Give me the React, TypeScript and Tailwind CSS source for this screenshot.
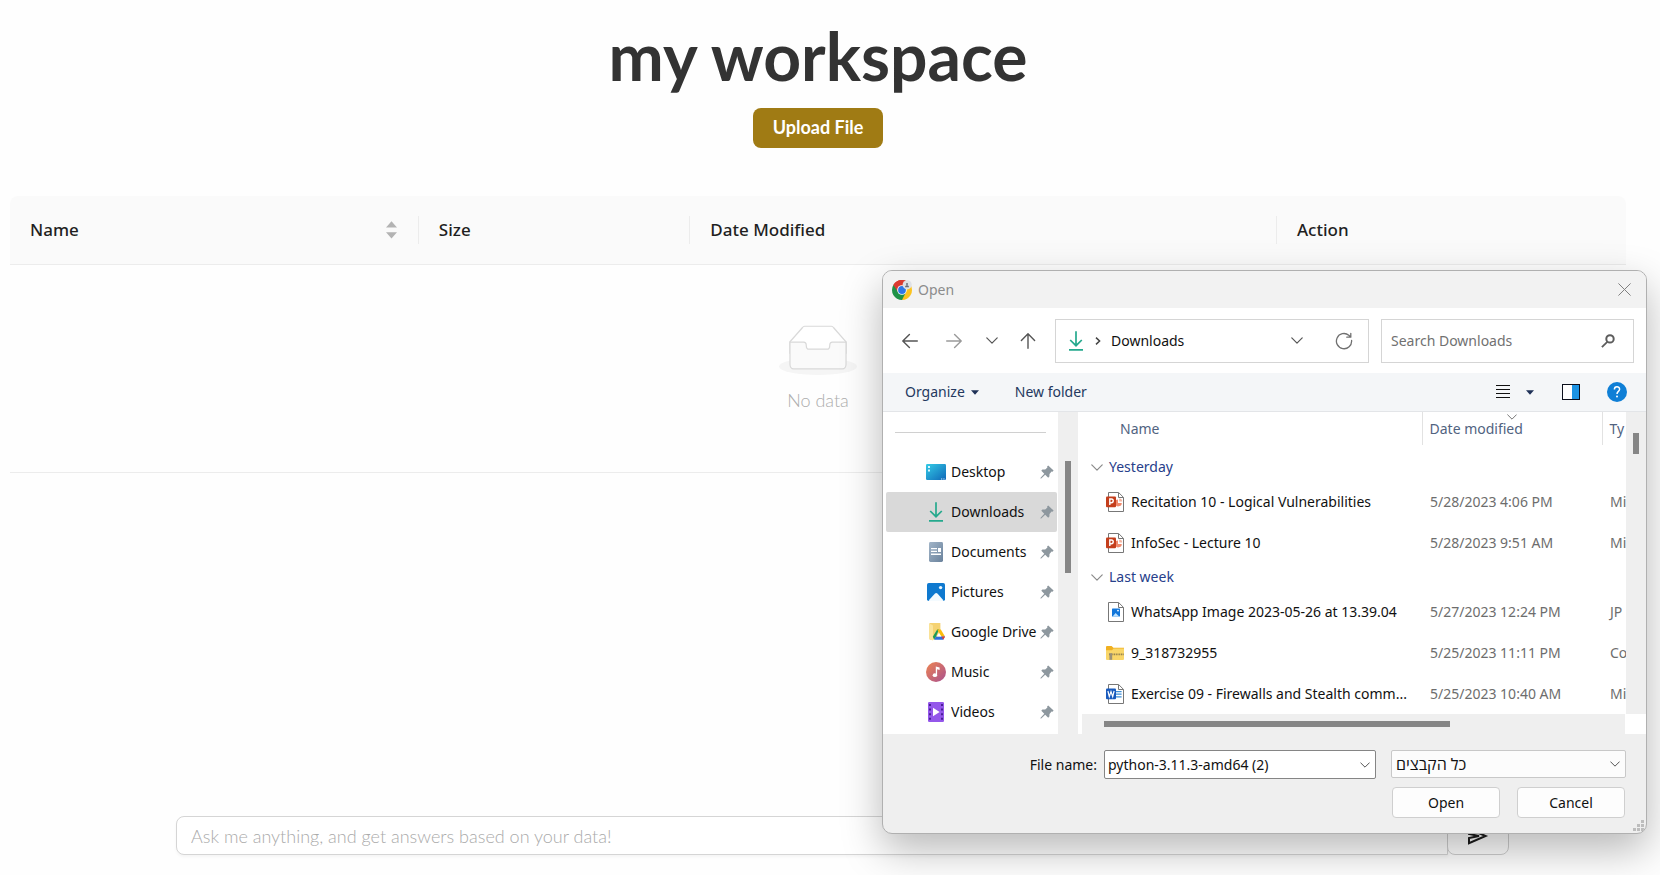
import type { ReactNode } from 'react';

const strokeProps = { fill: 'none', strokeLinecap: 'round', strokeLinejoin: 'round' } as const;

function ChromeIcon() {
  return (
    <svg width="20" height="20" viewBox="0 0 20 20" aria-hidden="true">
      <path d="M10 10 L1.34 5 A10 10 0 0 1 18.66 5 Z" fill="#db3a31" />
      <path d="M10 10 L18.66 5 A10 10 0 0 1 10 20 Z" fill="#fcc31e" />
      <path d="M10 10 L10 20 A10 10 0 0 1 1.34 5 Z" fill="#1f9247" />
      <path d="M10 5.5 H18.9 A10 10 0 0 0 18.66 5 Z" fill="#fcc31e" />
      <path d="M13.9 12.3 L10 20 L9 14 Z" fill="#1f9247" />
      <path d="M1.34 5 L6.1 12 L10 5.4 H18.8 L17 2.9 A10 10 0 0 0 1.34 5Z" fill="#db3a31" />
      <circle cx="10" cy="10" r="4.8" fill="#fff" />
      <circle cx="10" cy="10" r="3.9" fill="#2f77e8" />
      <circle cx="15.2" cy="4.8" r="4.6" fill="#dfe1e6" />
      <circle cx="15" cy="4" r="1" fill="#6b6f7c" />
      <path d="M13 7.2c0-2.6 4-2.6 4 0z" fill="#6b6f7c" />
    </svg>
  );
}

function CloseIcon() {
  return (
    <svg width="13" height="13" viewBox="0 0 13 13" stroke="#808080" {...strokeProps} aria-hidden="true">
      <path d="M.7 .7 L12.3 12.3 M12.3 .7 L.7 12.3" />
    </svg>
  );
}

function ArrowIcon({ className }: { className: string }) {
  return (
    <svg width="16" height="16" viewBox="0 0 16 16" stroke="currentColor" strokeWidth="1.4" {...strokeProps} className={className} aria-hidden="true">
      <path d="M15.3 8 H.9 M7.4 1.4 L.8 8 L7.4 14.6" />
    </svg>
  );
}

function ChevronDown({ className, width = 12 }: { className: string; width?: number }) {
  return (
    <svg width={width} height={width / 2 + 1} viewBox="0 0 12 7" stroke="currentColor" strokeWidth="1.2" {...strokeProps} className={className} aria-hidden="true">
      <path d="M.8 .9 L6 6.1 L11.2 .9" />
    </svg>
  );
}

function CrumbChevron() {
  return (
    <svg width="6" height="8" viewBox="0 0 6 8" stroke="#444" strokeWidth="1.5" fill="none" aria-hidden="true">
      <path d="M1 .6 L4.6 4 L1 7.4" />
    </svg>
  );
}

function Caret() {
  return (
    <svg width="8" height="5" viewBox="0 0 8 5" aria-hidden="true">
      <path d="M0 0.3 H8 L4 4.8 Z" fill="#1e3157" />
    </svg>
  );
}

function DownloadIcon() {
  return (
    <svg width="14" height="20" viewBox="0 0 14 20" stroke="#25a98d" strokeWidth="1.7" fill="none" aria-hidden="true">
      <path d="M7 .3 V14.3 M1.2 9 L7 14.7 L12.8 9 M0 18.9 H14" />
    </svg>
  );
}

function RefreshIcon() {
  return (
    <svg width="18" height="18" viewBox="0 0 18 18" stroke="#707070" strokeWidth="1.3" {...strokeProps} aria-hidden="true">
      <path d="M16.6 8.5 A7.6 7.6 0 1 1 13.8 3.2 L15.6 5 M15.8 1.3 V5.2 H11.8" />
    </svg>
  );
}

function SearchIcon() {
  return (
    <svg width="14" height="14" viewBox="0 0 14 14" stroke="#5c5c5c" fill="none" aria-hidden="true">
      <circle cx="9" cy="4.9" r="3.7" strokeWidth="2" />
      <path d="M6.3 7.8 L.9 13.2" strokeWidth="1.8" />
    </svg>
  );
}

function ListIcon() {
  return (
    <svg width="14" height="14" viewBox="0 0 14 14" stroke="#111" shapeRendering="crispEdges" aria-hidden="true">
      <path d="M0 .5 H14 M0 4.5 H14 M0 8.5 H14 M0 12.5 H14" />
    </svg>
  );
}

function PaneIcon() {
  return (
    <svg width="18" height="16" viewBox="0 0 18 16" aria-hidden="true">
      <rect x=".5" y=".5" width="17" height="15" fill="#fff" stroke="#0b0f1c" />
      <rect x="10" y="1" width="7" height="14" fill="#1c93e3" />
    </svg>
  );
}

function HelpIcon() {
  return (
    <svg width="20" height="20" viewBox="0 0 20 20" aria-hidden="true">
      <circle cx="10" cy="10" r="10" fill="#0f7fd6" />
      <path d="M7.4 7.4 C7.4 3.9 12.6 4 12.6 7.2 C12.6 9.3 10 9.5 10 12" fill="none" stroke="#fff" strokeWidth="1.5" />
      <circle cx="10" cy="14.6" r="1" fill="#fff" />
    </svg>
  );
}

function PinIcon() {
  return (
    <svg width="14" height="14" viewBox="0 0 14 14" fill="#8d979e" aria-hidden="true">
      <path d="M8.2 .4 L13.6 5.6 L12.6 6.8 L11.6 6.6 L9.5 9 L9.4 11.6 L8.2 12.7 L5.2 9.7 L1.2 13.4 L.4 13.6 L.6 12.7 L4.3 8.8 L1.3 5.8 L2.4 4.6 L5.2 4.5 L7.4 2.5 L7.1 1.5 Z" />
    </svg>
  );
}

function EmptyIcon() {
  return (
    <svg width="78" height="50" viewBox="0 0 64 41" aria-hidden="true">
      <g transform="translate(0 1)" fill="none" fillRule="evenodd">
        <ellipse fill="#f5f5f5" cx="32" cy="33" rx="32" ry="7" />
        <g fillRule="nonzero" stroke="#d9d9d9">
          <path d="M55 12.76L44.854 1.258C44.367.474 43.656 0 42.907 0H21.093c-.749 0-1.46.474-1.947 1.257L9 12.761V22h46v-9.24z" fill="#fff" />
          <path d="M41.613 15.931c0-1.605.994-2.93 2.227-2.931H55v18.137C55 33.26 53.68 35 52.05 35h-40.1C10.32 35 9 33.259 9 31.137V13h11.16c1.233 0 2.227 1.323 2.227 2.928v.022c0 1.605 1.005 2.901 2.237 2.901h14.752c1.232 0 2.237-1.308 2.237-2.913v-.007z" fill="#fafafa" />
        </g>
      </g>
    </svg>
  );
}

function DesktopIcon() {
  return (
    <svg width="20" height="16" viewBox="0 0 20 16" aria-hidden="true">
      <defs>
        <linearGradient id="desk" x1="0" y1="0" x2="1" y2="1">
          <stop offset="0" stopColor="#34cbe6" />
          <stop offset="1" stopColor="#0f68b8" />
        </linearGradient>
      </defs>
      <rect width="20" height="16" rx="1.2" fill="url(#desk)" />
      <path d="M2 2h2v2H2z M2 5.5h2v2H2z" fill="#d8f7ff" />
      <path d="M15 14.6h1.3v1H15z M17.3 14.6h1.3v1h-1.3z" fill="#cfe6fa" />
    </svg>
  );
}

function DocumentsIcon() {
  return (
    <svg width="14" height="20" viewBox="0 0 14 20" aria-hidden="true">
      <defs>
        <linearGradient id="docs" x1="0" y1="0" x2="1" y2="1">
          <stop offset="0" stopColor="#a2b5c8" />
          <stop offset="1" stopColor="#6a829c" />
        </linearGradient>
      </defs>
      <rect width="14" height="20" rx="1.4" fill="url(#docs)" />
      <path d="M2 6h6v1.3H2z M2 8.8h6v1.3H2z M2 11.6h10v1.3H2z M9 6h3v4H9z" fill="#fff" />
    </svg>
  );
}

function PicturesIcon() {
  return (
    <svg width="18" height="18" viewBox="0 0 18 18" aria-hidden="true">
      <rect width="18" height="18" rx="1.8" fill="#0f79cf" />
      <path d="M1.6 17.6 L8 10.6 Q9.2 9.6 10.4 10.6 L16.6 17.6 Q16.2 18 15.6 18 H2.6 Q2 18 1.6 17.6z" fill="#f4fbff" />
      <circle cx="13.6" cy="4.6" r="1.7" fill="#e8f6ff" />
    </svg>
  );
}

function DriveIcon() {
  return (
    <svg width="18" height="20" viewBox="0 0 18 20" aria-hidden="true">
      <path d="M2.2 2.2 Q2.2 1 3.4 1 H13.4 V16 L5 18 Q2.2 18.6 2.2 16z" fill="#f5d272" />
      <path d="M2.2 1.4 L5.4 3 Q6 3.4 6 4.2 V18.6 L3 17.4 Q2.2 17 2.2 16.2z" fill="#fbe49b" />
      <path d="M10.2 7.6 L12 7.6 L8.8 15 L7.2 17.4 L5.8 14.8z" fill="#1d9b57" />
      <path d="M10.2 7.6 H13.8 L18 14.6 H14.2z" fill="#fbbd0c" />
      <path d="M8.9 14.6 H18 L16.2 17.8 H7.2z" fill="#2d6fe0" />
      <path d="M14.6 14.6 H18 L16.2 17.8z" fill="#e6412f" />
      <path d="M12 10.8 L14.2 14.6 H9.7z" fill="#fff" />
    </svg>
  );
}

function MusicIcon() {
  return (
    <svg width="20" height="20" viewBox="0 0 20 20" aria-hidden="true">
      <defs>
        <linearGradient id="music" x1="0" y1="0" x2="1" y2="1">
          <stop offset="0" stopColor="#ee8552" />
          <stop offset="1" stopColor="#a9508f" />
        </linearGradient>
      </defs>
      <circle cx="10" cy="10" r="10" fill="url(#music)" />
      <ellipse cx="8.9" cy="13.2" rx="2.2" ry="1.9" fill="#fff" />
      <path d="M9.8 4.4 L13.6 5.6 V8 L11.1 7.2 V13.4 H9.8z" fill="#fff" />
    </svg>
  );
}

function VideosIcon() {
  return (
    <svg width="16" height="20" viewBox="0 0 16 20" aria-hidden="true">
      <rect width="16" height="20" rx="1.2" fill="#9457ea" />
      <path d="M1 2h2v2H1z M1 6.6h2v2H1z M1 11.2h2v2H1z M1 15.8h2v2H1z M13 2h2v2h-2z M13 6.6h2v2h-2z M13 11.2h2v2h-2z M13 15.8h2v2h-2z" fill="#4a1f96" />
      <path d="M5 5.8 L11.6 10 L5 14.2z" fill="#fff" />
    </svg>
  );
}

function Sheet({ children }: { children: ReactNode }) {
  return (
    <svg width="18" height="20" viewBox="0 0 18 20" aria-hidden="true">
      <path d="M2.5 .5 H12.6 L17.5 5.4 V19.5 H2.5z" fill="#fff" stroke="#777" />
      <path d="M12.5 .6 V5.5 H17.4" fill="none" stroke="#777" />
      {children}
    </svg>
  );
}

function SlidesIcon() {
  return (
    <Sheet>
      <path d="M12 7.6 A3.4 3.4 0 1 0 15.8 11 H12z" fill="#f08a6d" />
      <path d="M13.2 6.6 A3 3 0 0 1 16.2 9.6 H13.2z" fill="#f4b5a2" />
      <rect x="0" y="4.6" width="10" height="10.6" rx="1" fill="#c43e1c" />
      <path d="M3.8 13 V7 H5.4 a1.8 1.8 0 0 1 0 3.7 H3.8" fill="none" stroke="#fff" strokeWidth="1.4" />
    </Sheet>
  );
}

function WordIcon() {
  return (
    <Sheet>
      <path d="M10 7h5.6v1.2H10z M10 9.6h5.6v1.2H10z M10 12.2h5.6v1.2H10z" fill="#3d8ed8" />
      <rect x="0" y="4.6" width="10" height="10.6" rx="1" fill="#185abd" />
      <path d="M1.9 7 L3.3 12.6 L5 7.6 L6.7 12.6 L8.1 7" fill="none" stroke="#fff" strokeWidth="1.2" />
    </Sheet>
  );
}

function ImageFileIcon() {
  return (
    <Sheet>
      <rect x="6" y="6.6" width="8" height="8" rx=".6" fill="#1276da" />
      <path d="M6.6 14.4 L9.6 11 L13.2 14.4z" fill="#bfe3ff" />
      <circle cx="12" cy="8.6" r=".9" fill="#fff" />
    </Sheet>
  );
}

function ZipIcon() {
  return (
    <svg width="18" height="14" viewBox="0 0 18 14" aria-hidden="true">
      <path d="M0 1 Q0 0 1 0 H5.6 L7.4 1.8 H18 V5 H0z" fill="#f0b021" />
      <path d="M0 4.2 H6 L7.6 2.6 H18 V13 Q18 14 17 14 H1 Q0 14 0 13z" fill="#f9d669" />
      <path d="M3 8.4 H18" stroke="#8b7b4d" strokeWidth="1.8" strokeDasharray="1 .7" />
      <path d="M3.4 7.2 H6.2 V13.8 H3.4z" fill="#9a9178" />
    </svg>
  );
}

function SendIcon() {
  return (
    <svg width="22" height="20" viewBox="0 0 22 20" fill="none" stroke="#1c1c1c" strokeWidth="2" aria-hidden="true">
      <path d="M2 2.8 L18.6 10 L2 17.2 V12 L12 10 L2 8z" />
    </svg>
  );
}

function GripIcon() {
  return (
    <svg width="11" height="11" viewBox="0 0 11 11" fill="#bdbdbd" aria-hidden="true">
      <path d="M8 0h3v3H8z M8 4h3v3H8z M8 8h3v3H8z M4 4h3v3H4z M4 8h3v3H4z M0 8h3v3H0z" />
    </svg>
  );
}

function Sorter() {
  return (
    <svg width="11" height="18" viewBox="0 0 11 18" fill="#b3b3b3" aria-hidden="true">
      <path d="M5.5 .3 L11 6.6 H0z M0 11.3 H11 L5.5 17.6z" />
    </svg>
  );
}

const places = [
  { label: 'Desktop', icon: <DesktopIcon /> },
  { label: 'Downloads', icon: <DownloadIcon />, active: true },
  { label: 'Documents', icon: <DocumentsIcon /> },
  { label: 'Pictures', icon: <PicturesIcon /> },
  { label: 'Google Drive', icon: <DriveIcon /> },
  { label: 'Music', icon: <MusicIcon /> },
  { label: 'Videos', icon: <VideosIcon /> },
];

const groups = [
  {
    title: 'Yesterday',
    pad: 'h-9 pt-2',
    files: [
      { name: 'Recitation 10 - Logical Vulnerabilities', date: '5/28/2023 4:06 PM', type: 'Mi', icon: <SlidesIcon /> },
      { name: 'InfoSec - Lecture 10', date: '5/28/2023 9:51 AM', type: 'Mi', icon: <SlidesIcon /> },
    ],
  },
  {
    title: 'Last week',
    pad: 'h-7',
    files: [
      { name: 'WhatsApp Image 2023-05-26 at 13.39.04', date: '5/27/2023 12:24 PM', type: 'JP', icon: <ImageFileIcon /> },
      { name: '9_318732955', date: '5/25/2023 11:11 PM', type: 'Co', icon: <ZipIcon /> },
      { name: 'Exercise 09 - Firewalls and Stealth comm...', date: '5/25/2023 10:40 AM', type: 'Mi', icon: <WordIcon /> },
    ],
  },
];

function Sidebar() {
  return (
    <nav aria-label="Places" className="w-[175px] shrink-0 bg-white">
      <div className="mx-3 mt-5 mb-[19px] border-t border-[#d0d0d0]" />
      <ul>
        {places.map((p) => (
          <li key={p.label}>
            <a
              href="#"
              className={
                p.active
                  ? 'ml-[3px] mr-px flex h-10 items-center rounded-xs bg-[#d9d9d9] pl-10 pr-[3px]'
                  : 'ml-[3px] mr-px flex h-10 items-center pl-10 pr-[3px]'
              }
            >
              <span className="flex w-5 shrink-0 justify-center">{p.icon}</span>
              <span className="ml-[5px] min-w-0 flex-1 overflow-hidden whitespace-nowrap">{p.label}</span>
              <span className="ml-0.5 shrink-0">
                <PinIcon />
              </span>
            </a>
          </li>
        ))}
      </ul>
    </nav>
  );
}

function FileList() {
  return (
    <table className="w-full table-fixed border-collapse">
      <colgroup>
        <col />
        <col className="w-[180px]" />
        <col className="w-6" />
      </colgroup>
      <thead>
        <tr className="h-[33px] text-left text-[#51637f]">
          <th className="pl-[38px] font-normal">Name</th>
          <th className="relative border-l border-[#e2e2e2] pl-[7px] font-normal">
            Date modified
            <ChevronDown width={10} className="absolute left-[84px] top-0.5 text-[#777]" />
          </th>
          <th className="overflow-hidden whitespace-nowrap border-l border-[#e2e2e2] pl-[7px] font-normal">Ty</th>
        </tr>
      </thead>
      {groups.map((g) => (
        <tbody key={g.title}>
          <tr>
            <th colSpan={3} scope="rowgroup" className={`${g.pad} pl-[9px] text-left font-normal text-[#27408b]`}>
              <span className="flex items-center gap-1.5">
                <ChevronDown className="text-[#8a8a8a]" />
                {g.title}
              </span>
            </th>
          </tr>
          {g.files.map((f) => (
            <tr key={f.name} className="h-[41px]">
              <td className="pl-6">
                <span className="flex items-center gap-[7px]">
                  {f.icon}
                  <span className="whitespace-nowrap">{f.name}</span>
                </span>
              </td>
              <td className="whitespace-nowrap pl-2 text-[#6d6d6d]">{f.date}</td>
              <td className="overflow-hidden whitespace-nowrap pl-2 text-[#6d6d6d]">{f.type}</td>
            </tr>
          ))}
        </tbody>
      ))}
    </table>
  );
}

function OpenDialog() {
  return (
    <section
      role="dialog"
      aria-label="Open"
      className="absolute right-[13px] top-[270px] w-[765px] overflow-hidden rounded-[10px] border border-[#b0b0b0] bg-[#efefef] font-['Noto_Sans','Open_Sans',sans-serif] text-[14px] leading-5 text-[#111] shadow-[0_16px_40px_rgba(0,0,0,0.28)]"
    >
      <header className="flex h-[37px] items-center bg-[#f2f2f2] pl-[9px] pr-[15px]">
        <ChromeIcon />
        <h2 className="ml-1.5 flex-1 text-[#8c8c8c]">Open</h2>
        <button type="button" aria-label="Close">
          <CloseIcon />
        </button>
      </header>

      <div className="flex h-[65px] items-center bg-white pl-[19px] pr-3">
        <button type="button" aria-label="Back">
          <ArrowIcon className="text-[#555]" />
        </button>
        <button type="button" aria-label="Forward" className="ml-7">
          <ArrowIcon className="rotate-180 text-[#9a9a9a]" />
        </button>
        <button type="button" aria-label="Recent locations" className="ml-6">
          <ChevronDown className="text-[#555]" />
        </button>
        <button type="button" aria-label="Up" className="ml-[22px]">
          <ArrowIcon className="rotate-90 text-[#555]" />
        </button>
        <div className="ml-[19px] flex h-11 flex-1 items-center border border-[#d5d5d5] pl-[13px] pr-[15px]">
          <DownloadIcon />
          <span className="ml-3">
            <CrumbChevron />
          </span>
          <span className="ml-2.5 flex-1">Downloads</span>
          <button type="button" aria-label="Previous locations" className="mr-8">
            <ChevronDown className="text-[#555]" />
          </button>
          <button type="button" aria-label="Refresh">
            <RefreshIcon />
          </button>
        </div>
        <label className="ml-3 flex h-11 w-[253px] items-center border border-[#d5d5d5] pl-[9px] pr-[18px]">
          <input
            type="search"
            aria-label="Search Downloads"
            placeholder="Search Downloads"
            className="min-w-0 flex-1 bg-transparent outline-none placeholder:text-[#717171]"
          />
          <SearchIcon />
        </label>
      </div>

      <div className="flex h-[39px] items-center border-b border-[#e3e5e8] bg-[#f4f6f8] pl-[22px] pr-[19px] text-[#24395f]">
        <button type="button" className="flex items-center gap-1.5">
          Organize
          <Caret />
        </button>
        <button type="button" className="ml-9">
          New folder
        </button>
        <div className="ml-auto flex items-center">
          <button type="button" aria-label="Change view">
            <ListIcon />
          </button>
          <button type="button" aria-label="More view options" className="ml-4">
            <Caret />
          </button>
          <button type="button" aria-label="Preview pane" className="ml-7">
            <PaneIcon />
          </button>
          <button type="button" aria-label="Help" className="ml-[27px]">
            <HelpIcon />
          </button>
        </div>
      </div>

      <div className="flex">
        <Sidebar />
        <div className="w-5 shrink-0 bg-[#efefef] pt-[49px]">
          <div className="mx-auto h-28 w-1.5 bg-[#868686]" />
        </div>
        <div className="flex min-w-0 flex-1 flex-col border-l-4 border-white bg-white">
          <div className="flex flex-1">
            <div className="min-w-0 flex-1">
              <FileList />
            </div>
            <div className="w-5 shrink-0 bg-[#efefef] pt-[21px]">
              <div className="mx-auto h-[21px] w-1.5 bg-[#868686]" />
            </div>
          </div>
          <div className="mr-[21px] h-5 bg-[#efefef] pl-[22px] pt-[7px]">
            <div className="h-1.5 w-[346px] bg-[#868686]" />
          </div>
        </div>
      </div>

      <footer className="grid grid-cols-[1fr_272px_235px] gap-x-[15px] gap-y-2 pb-[15px] pr-5 pt-4">
        <label htmlFor="file-name" className="-mr-2 self-center text-right">
          File name:
        </label>
        <div className="flex h-[29px] items-center rounded-xs border border-[#858585] bg-white pl-[3px] pr-[5px]">
          <input id="file-name" defaultValue="python-3.11.3-amd64 (2)" className="min-w-0 flex-1 bg-transparent outline-none" />
          <button type="button" aria-label="Show file names">
            <ChevronDown width={10} className="text-[#555]" />
          </button>
        </div>
        <div className="relative h-7">
          <select
            aria-label="File type"
            className="h-7 w-full appearance-none rounded-xs border border-[#c8c8c8] bg-[#fcfcfc] px-1 font-['Open_Sans',sans-serif] text-[16px]"
          >
            <option>כל הקבצים</option>
          </select>
          <ChevronDown width={10} className="pointer-events-none absolute right-1.5 top-[11px] text-[#555]" />
        </div>
        <div className="col-start-3 flex justify-between px-px">
          <button type="button" className="h-[31px] w-[108px] rounded-sm border border-[#cfcfcf] bg-[#fdfdfd]">
            Open
          </button>
          <button type="button" className="h-[31px] w-[108px] rounded-sm border border-[#cfcfcf] bg-[#fdfdfd]">
            Cancel
          </button>
        </div>
      </footer>
      <div className="absolute bottom-0.5 right-0.5">
        <GripIcon />
      </div>
    </section>
  );
}

export default function App() {
  return (
    <div className="relative flex min-h-screen flex-col overflow-hidden bg-[#fefefe] pb-5 font-['Lato',sans-serif]">
      <main className="flex flex-1 flex-col pl-2.5 pr-[34px]">
        <h1 className="mt-4 text-center text-[66px] font-bold leading-20 text-[#333]">my workspace</h1>
        <button
          type="button"
          className="mx-auto mt-3 h-10 w-[130px] rounded-lg bg-[#a07b14] pb-0.5 text-[18px] font-bold text-white"
        >
          Upload File
        </button>

        <table className="mt-12 w-full table-fixed border-separate border-spacing-0">
          <colgroup>
            <col className="w-[25.3%]" />
            <col className="w-[16.8%]" />
            <col className="w-[36.3%]" />
            <col />
          </colgroup>
          <thead>
            <tr className="h-[69px] bg-[#fafafa] text-left font-['Noto_Sans',sans-serif] text-[17px] text-[#1f1f1f]">
              <th className="rounded-tl-lg border-b border-[#ececec] font-medium">
                <button type="button" className="flex h-7 w-full items-center justify-between border-r border-[#ececec] pl-5 pr-[21px]">
                  Name
                  <Sorter />
                </button>
              </th>
              <th className="border-b border-[#ececec] font-medium">
                <div className="flex h-7 items-center border-r border-[#ececec] pl-5">Size</div>
              </th>
              <th className="border-b border-[#ececec] font-medium">
                <div className="flex h-7 items-center border-r border-[#ececec] pl-5">Date Modified</div>
              </th>
              <th className="rounded-tr-lg border-b border-[#ececec] pl-5 font-medium">Action</th>
            </tr>
          </thead>
          <tbody>
            <tr>
              <td colSpan={4} className="h-52 border-b border-[#ececec] text-[18px] font-light text-[#adadad]">
                <div className="flex flex-col items-center gap-3 pt-0.5">
                  <EmptyIcon />
                  No data
                </div>
              </td>
            </tr>
          </tbody>
        </table>
      </main>

      <form className="ml-44 mr-[151px] flex" onSubmit={(e) => e.preventDefault()}>
        <input
          aria-label="Ask a question"
          placeholder="Ask me anything, and get answers based on your data!"
          className="h-[39px] min-w-0 flex-1 rounded-l-lg border border-[#d5d5d5] bg-white px-3.5 text-[18px] font-light shadow-[0_2px_3px_rgba(0,0,0,0.04)] outline-none placeholder:text-[#aaa]"
        />
        <button
          type="submit"
          aria-label="Send"
          className="-ml-px flex h-[39px] w-[62px] items-center justify-center rounded-r-lg rounded-bl-lg border border-[#cfcfcf] bg-white"
        >
          <SendIcon />
        </button>
      </form>

      <OpenDialog />
    </div>
  );
}
